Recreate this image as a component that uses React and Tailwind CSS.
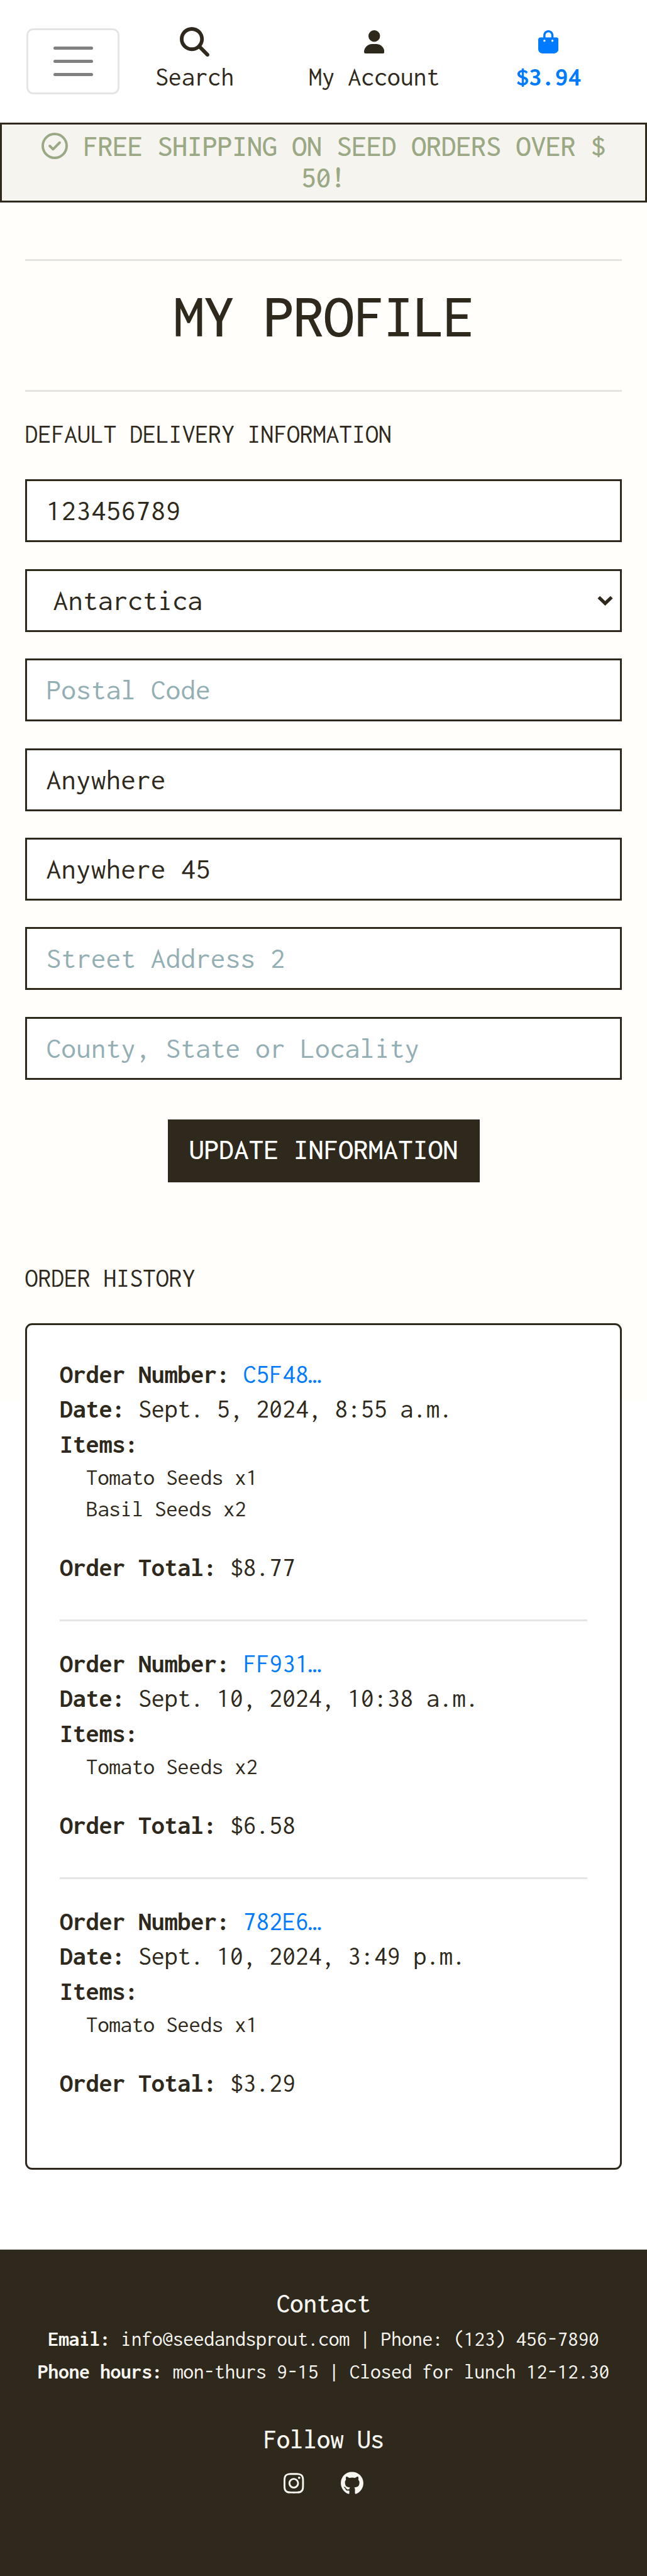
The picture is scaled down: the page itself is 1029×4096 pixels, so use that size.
import React from "react";
import {
  FaMagnifyingGlass,
  FaUser,
  FaBagShopping,
  FaRegCircleCheck,
  FaInstagram,
  FaGithub,
} from "react-icons/fa6";

const fields = [
  { name: "phone", placeholder: "Phone Number", value: "123456789" },
  { name: "country", select: true, value: "Antarctica" },
  { name: "postcode", placeholder: "Postal Code", value: "" },
  { name: "town", placeholder: "Town or City", value: "Anywhere" },
  { name: "street1", placeholder: "Street Address 1", value: "Anywhere 45" },
  { name: "street2", placeholder: "Street Address 2", value: "" },
  { name: "county", placeholder: "County, State or Locality", value: "" },
];

const orders = [
  {
    number: "C5F48…",
    date: "Sept. 5, 2024, 8:55 a.m.",
    items: ["Tomato Seeds x1", "Basil Seeds x2"],
    total: "$8.77",
  },
  {
    number: "FF931…",
    date: "Sept. 10, 2024, 10:38 a.m.",
    items: ["Tomato Seeds x2"],
    total: "$6.58",
  },
  {
    number: "782E6…",
    date: "Sept. 10, 2024, 3:49 p.m.",
    items: ["Tomato Seeds x1"],
    total: "$3.29",
  },
];

function NavItem({ icon, label, className }) {
  return (
    <a className={`flex flex-col items-center ${className}`}>
      <span className="flex h-[47px] items-center">{icon}</span>
      <span className="mt-[7px] text-[42.22px] leading-[50px] whitespace-nowrap">{label}</span>
    </a>
  );
}

function Header() {
  return (
    <header className="flex h-[195px] items-start bg-white">
      <button className="mt-[45px] ml-[42px] flex h-[105px] w-[148px] flex-col items-center justify-center gap-[16px] rounded-[11px] border-[3px] border-black/10">
        <span className="h-[5px] w-[63px] rounded-full bg-[#808080]" />
        <span className="h-[5px] w-[63px] rounded-full bg-[#808080]" />
        <span className="h-[5px] w-[63px] rounded-full bg-[#808080]" />
      </button>
      <NavItem
        className="mt-[43px] ml-[57px] w-[125px]"
        icon={<FaMagnifyingGlass className="size-[47px]" />}
        label="Search"
      />
      <NavItem
        className="mt-[43px] ml-[119px] w-[208px]"
        icon={<FaUser className="h-[37px] w-[32.4px]" />}
        label="My Account"
      />
      <NavItem
        className="mt-[43px] ml-[121px] w-[104px] font-bold text-[#007bff]"
        icon={<FaBagShopping className="h-[37px] w-[32.4px]" />}
        label="$3.94"
      />
    </header>
  );
}

function Banner() {
  return (
    <div className="h-[127px] border-[3px] border-[#2e291c] bg-[#f6f4ef] pt-[9px] text-center text-[48px] leading-[50px] font-medium tracking-[-0.25px] text-[#9aa885]">
      <FaRegCircleCheck className="inline size-[42px] align-[-5px]" /> FREE SHIPPING ON SEED ORDERS OVER $
      <br />
      50!
    </div>
  );
}

function Field({ field }) {
  if (field.select) {
    return (
      <div className="flex h-[100px] items-center justify-between border-[3px] border-[#2e291c] bg-white pr-[11px] pl-[42px]">
        <span>{field.value}</span>
        <svg viewBox="0 0 28 18" className="h-[16px] w-[25px]" fill="none" stroke="#2e291c" strokeWidth="6">
          <path d="M2.5 3 L14 14 L25.5 3" />
        </svg>
      </div>
    );
  }
  return (
    <input
      name={field.name}
      defaultValue={field.value}
      placeholder={field.placeholder}
      className="block h-[100px] w-full border-[3px] border-[#2e291c] bg-white pb-[2px] pl-[31px] placeholder:text-[#94afb4]"
    />
  );
}

function Order({ order }) {
  return (
    <div>
      <p>
        <b>Order Number:</b> <a className="text-[#007bff]">{order.number}</a>
      </p>
      <p>
        <b>Date:</b> {order.date}
      </p>
      <p>
        <b>Items:</b>
      </p>
      <ul className="mb-[41px] ml-[42px] text-[36.94px] leading-[50.1px]">
        {order.items.map((item) => (
          <li key={item}>{item}</li>
        ))}
      </ul>
      <p>
        <b>Order Total:</b> {order.total}
      </p>
    </div>
  );
}

function Footer() {
  return (
    <footer className="flex h-[519px] flex-col items-center bg-[#2e291c] pt-[60px] text-[#f8f6f1]">
      <h5 className="text-[43.3px] leading-[52px] font-medium">Contact</h5>
      <div className="mt-[4.5px] text-center text-[33.77px] leading-[52px] tracking-[-0.35px] whitespace-nowrap">
        <p>
          <b>Email:</b> info@seedandsprout.com | Phone: (123) 456-7890
        </p>
        <p>
          <b>Phone hours:</b> mon-thurs 9-15 | Closed for lunch 12-12.30
        </p>
      </div>
      <h5 className="mt-[56px] text-[43.3px] leading-[52px] font-medium">Follow Us</h5>
      <div className="mt-[24.5px] flex gap-[58px]">
        <FaInstagram className="h-[37px] w-[32.4px]" />
        <FaGithub className="h-[37px] w-[36px]" />
      </div>
    </footer>
  );
}

export default function App() {
  return (
    <div className="min-h-[4096px] w-[1029px] bg-[linear-gradient(#fffefa_2227px,#ffffff_2227px)] font-['Inconsolata',monospace] tracking-[-0.29px] text-[#2e291c]">
      <Header />
      <Banner />
      <main className="px-[39.6px] pt-[89.5px]">
        <hr className="h-[3px] border-0 bg-[#e5e4e1]" />
        <h2 className="h-[205px] text-center text-[97.6px] leading-[176px] font-medium tracking-[-1.1px]">MY PROFILE</h2>
        <hr className="h-[3px] border-0 bg-[#e5e4e1]" />
        <p className="h-[139.6px] text-[42.22px] leading-[134px]">DEFAULT DELIVERY INFORMATION</p>
        <form className="flex flex-col gap-[42.48px] text-[47.49px] tracking-normal">
          {fields.map((field) => (
            <Field key={field.name} field={field} />
          ))}
        </form>
        <button className="mx-auto mt-[63.5px] flex h-[100px] w-[496px] items-center justify-center bg-[#2e291c] pb-[5px] text-[47.49px] leading-none font-medium tracking-normal text-white">
          UPDATE INFORMATION
        </button>
        <p className="mt-[127px] text-[42.22px] leading-[50px]">ORDER HISTORY</p>
        <section className="mt-[47px] h-[1346px] rounded-[11px] border-[3px] border-[#2e291c] bg-white px-[52.4px] pt-[50.3px] text-[42.22px] leading-[55.4px]">
          {orders.map((order, i) => (
            <React.Fragment key={order.number}>
              {i > 0 && <hr className="mt-[54.3px] mb-[40.1px] h-[3px] border-0 bg-[#e5e5e5]" />}
              <Order order={order} />
            </React.Fragment>
          ))}
        </section>
        <div className="h-[126.5px]" />
      </main>
      <Footer />
    </div>
  );
}
